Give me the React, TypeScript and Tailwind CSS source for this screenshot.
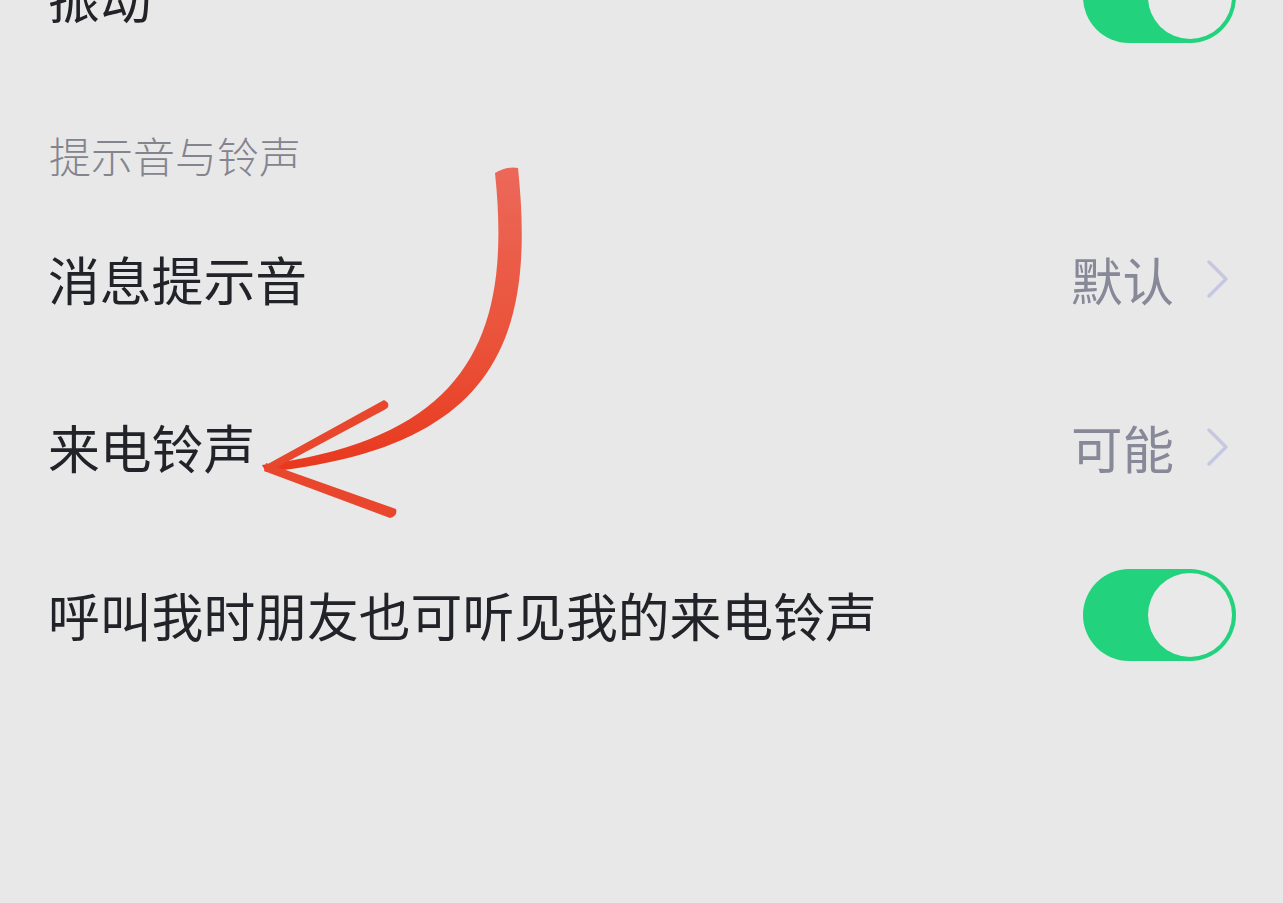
import React from "react";

const Toggle = () => (
  <div className="flex h-[92px] w-[153px] items-center justify-end rounded-full bg-[#22d27c] p-[4px]">
    <div className="h-[84px] w-[84px] rounded-full bg-[#e9e9e9]" />
  </div>
);

const Chevron = () => (
  <svg width="24" height="40" viewBox="0 0 24 40" className="mr-[6px]">
    <path d="M3 3 L20 20 L3 37" fill="none" stroke="#c6c8e2" strokeWidth="3.5" strokeLinecap="round" strokeLinejoin="round" />
  </svg>
);

const Row = ({ label, value, toggle }: { label: string; value?: string; toggle?: boolean }) => (
  <div className="flex h-[168px] items-center justify-between pl-[48px] pr-[47px]">
    <span className="text-[51.8px] leading-none text-[#222328]">{label}</span>
    {toggle ? (
      <Toggle />
    ) : (
      <div className="flex items-center gap-[32px]">
        <span className="text-[51.5px] leading-none text-[#878898]">{value}</span>
        <Chevron />
      </div>
    )}
  </div>
);

const Arrow = () => (
  <svg className="pointer-events-none absolute left-0 top-0" width="1283" height="903" viewBox="0 0 1283 903">
    <defs>
      <linearGradient id="arrowFill" x1="0" y1="0" x2="0" y2="1">
        <stop offset="0" stopColor="#ec6859" />
        <stop offset="0.6" stopColor="#ea5138" />
        <stop offset="1" stopColor="#e8381d" />
      </linearGradient>
    </defs>
    <path
      d="M495 173 Q506 166 518 168 C536 340 496 448 266 472 L262 465 C470 438 512 335 495 173 Z"
      fill="url(#arrowFill)"
    />
    <path d="M266 465 L384 400 Q392 404 386 409 L270 471 Z" fill="#e9472d" />
    <path d="M266 463 L396 509 Q398 516 390 518 L264 471 Z" fill="#e9472d" />
  </svg>
);

export default function App() {
  return (
    <div
      className="relative h-[903px] w-full overflow-hidden bg-[#e8e8e8]"
      style={{ fontFamily: '"Noto Sans CJK SC", "Noto Sans", sans-serif' }}
    >
      <div className="-mt-[87px] flex flex-col">
        <Row label="振动" toggle />
        <div className="flex h-[114px] items-end pb-[19px] pl-[49px]">
          <span className="text-[42px] font-light leading-none text-[#84848f]">提示音与铃声</span>
        </div>
        <Row label="消息提示音" value="默认" />
        <Row label="来电铃声" value="可能" />
        <Row label="呼叫我时朋友也可听见我的来电铃声" toggle />
      </div>
      <Arrow />
    </div>
  );
}
